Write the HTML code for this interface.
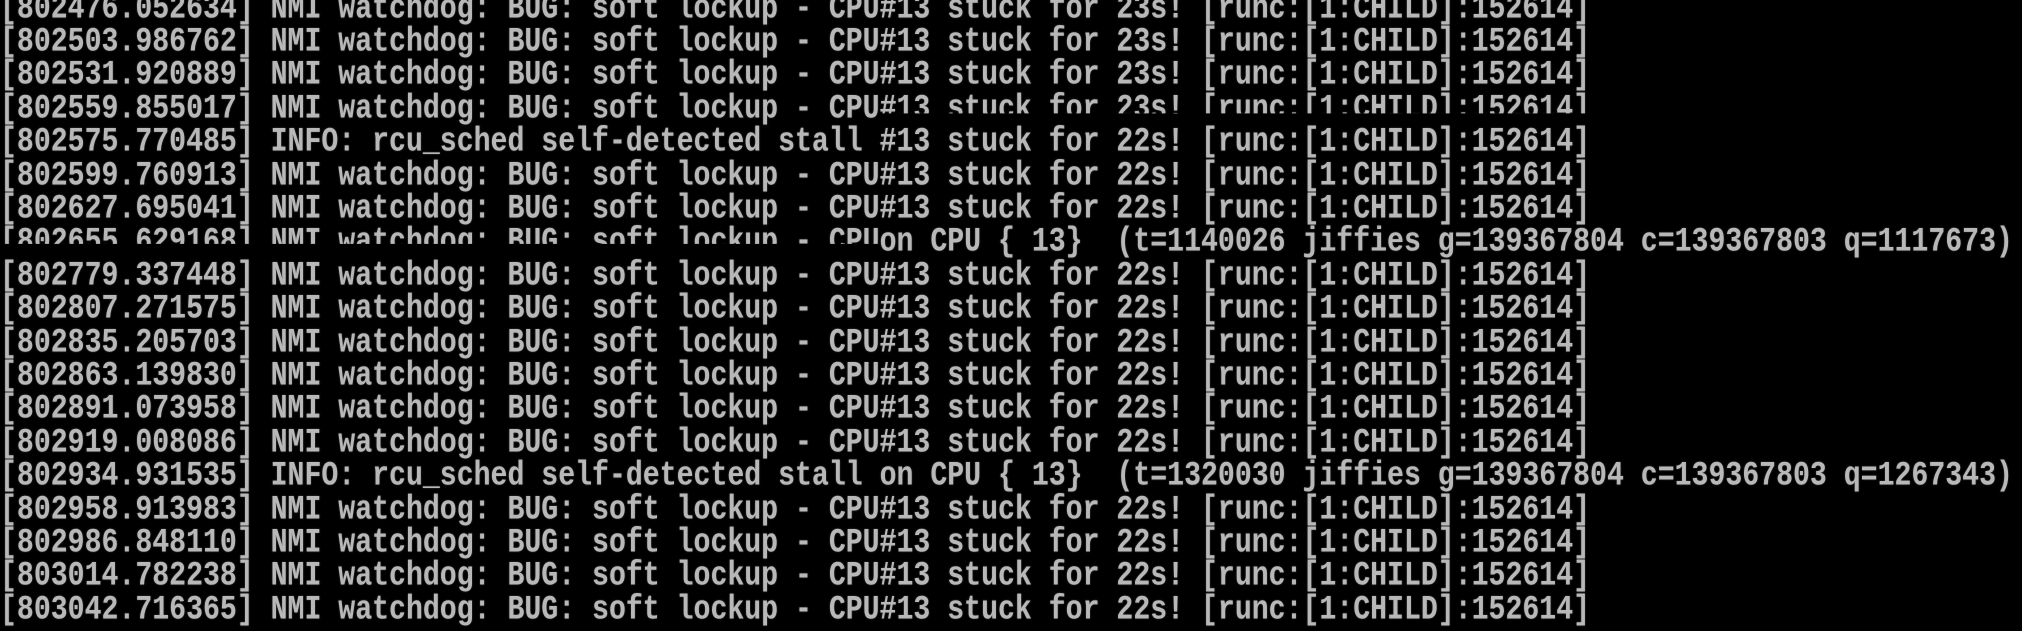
<!DOCTYPE html>
<html><head><meta charset="utf-8"><style>
html,body{margin:0;padding:0;background:#000;width:2022px;height:612px;overflow:hidden}
.l{position:absolute;left:0px;height:34px;line-height:34px;font-family:"Liberation Mono","DejaVu Sans Mono",monospace;font-size:28.2px;font-weight:bold;color:#b8b8b8;white-space:pre;transform:scaleY(1.22);transform-origin:0 50%;text-shadow:0 0 1.5px rgba(200,200,200,.4)}
.c{display:inline-block;clip-path:inset(0 0 42% 0)}
</style></head><body>
<div class="l" style="top:-7.5px">[802476.052634] NMI watchdog: BUG: soft lockup - CPU#13 stuck for 23s! [runc:[1:CHILD]:152614]</div>
<div class="l" style="top:25.9px">[802503.986762] NMI watchdog: BUG: soft lockup - CPU#13 stuck for 23s! [runc:[1:CHILD]:152614]</div>
<div class="l" style="top:59.3px">[802531.920889] NMI watchdog: BUG: soft lockup - CPU#13 stuck for 23s! [runc:[1:CHILD]:152614]</div>
<div class="l" style="top:92.7px">[802559.855017] NMI watchdog: BUG: soft lockup - CPU<span class="c">#13 stuck for 23s! [runc:[1:CHILD]:152614]</span></div>
<div class="l" style="top:126.1px">[802575.770485] INFO: rcu_sched self-detected stall #13 stuck for 22s! [runc:[1:CHILD]:152614]</div>
<div class="l" style="top:159.5px">[802599.760913] NMI watchdog: BUG: soft lockup - CPU#13 stuck for 22s! [runc:[1:CHILD]:152614]</div>
<div class="l" style="top:192.9px">[802627.695041] NMI watchdog: BUG: soft lockup - CPU#13 stuck for 22s! [runc:[1:CHILD]:152614]</div>
<div class="l" style="top:226.3px"><span class="c" style="clip-path:inset(0 0 48% 0)">[802655.629168] NMI watchdog: BUG: soft lockup - CPU</span>on CPU { 13}  (t=1140026 jiffies g=139367804 c=139367803 q=1117673)</div>
<div class="l" style="top:259.7px">[802779.337448] NMI watchdog: BUG: soft lockup - CPU#13 stuck for 22s! [runc:[1:CHILD]:152614]</div>
<div class="l" style="top:293.1px">[802807.271575] NMI watchdog: BUG: soft lockup - CPU#13 stuck for 22s! [runc:[1:CHILD]:152614]</div>
<div class="l" style="top:326.5px">[802835.205703] NMI watchdog: BUG: soft lockup - CPU#13 stuck for 22s! [runc:[1:CHILD]:152614]</div>
<div class="l" style="top:359.9px">[802863.139830] NMI watchdog: BUG: soft lockup - CPU#13 stuck for 22s! [runc:[1:CHILD]:152614]</div>
<div class="l" style="top:393.3px">[802891.073958] NMI watchdog: BUG: soft lockup - CPU#13 stuck for 22s! [runc:[1:CHILD]:152614]</div>
<div class="l" style="top:426.7px">[802919.008086] NMI watchdog: BUG: soft lockup - CPU#13 stuck for 22s! [runc:[1:CHILD]:152614]</div>
<div class="l" style="top:460.1px">[802934.931535] INFO: rcu_sched self-detected stall on CPU { 13}  (t=1320030 jiffies g=139367804 c=139367803 q=1267343)</div>
<div class="l" style="top:493.5px">[802958.913983] NMI watchdog: BUG: soft lockup - CPU#13 stuck for 22s! [runc:[1:CHILD]:152614]</div>
<div class="l" style="top:526.9px">[802986.848110] NMI watchdog: BUG: soft lockup - CPU#13 stuck for 22s! [runc:[1:CHILD]:152614]</div>
<div class="l" style="top:560.3px">[803014.782238] NMI watchdog: BUG: soft lockup - CPU#13 stuck for 22s! [runc:[1:CHILD]:152614]</div>
<div class="l" style="top:593.7px">[803042.716365] NMI watchdog: BUG: soft lockup - CPU#13 stuck for 22s! [runc:[1:CHILD]:152614]</div>
</body></html>
